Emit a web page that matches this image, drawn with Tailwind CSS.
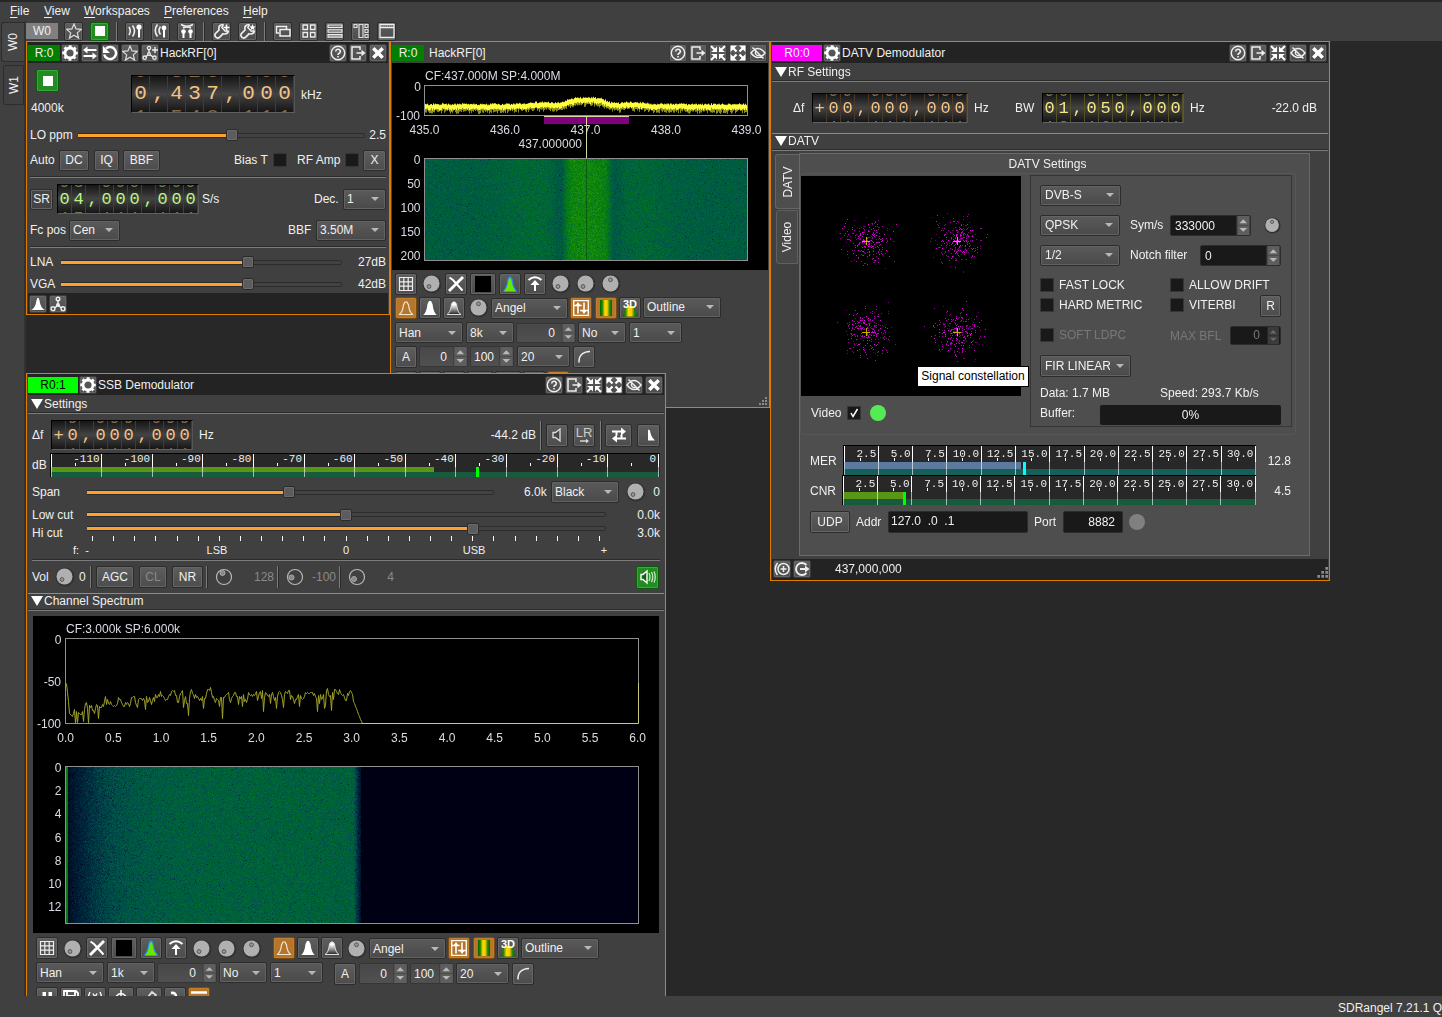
<!DOCTYPE html>
<html lang="en">
<head>
<meta charset="utf-8">
<title>SDRangel</title>
<script src="https://cdn.jsdelivr.net/npm/@tailwindcss/browser@4"></script>
</head>
<body class="h-[1017px] w-[1442px] overflow-hidden bg-[#404040] font-['Liberation_Sans',Arial,sans-serif] text-[12px] leading-[14px] text-[#f0f0f0] whitespace-nowrap
[&_button]:flex [&_button]:shrink-0 [&_button]:items-center [&_button]:justify-center [&_button]:rounded-[2px] [&_button]:border [&_button]:border-[#2c2c2c] [&_button]:bg-linear-to-b [&_button]:from-[#5e5e5e] [&_button]:to-[#4c4c4c] [&_button]:shadow-[inset_0_0_0_1px_#666]
[&_button_svg]:size-4 [&_button_svg]:shrink-0 [&_svg]:shrink-0
[&_.tb]:size-[18px] [&_.tb]:border-[#3a3a3a] [&_.tool]:size-[19px] [&_.sq]:h-[22px] [&_.sq]:w-[22px]
[&_.on]:border-[#7a4a10] [&_.on]:from-[#b5762c] [&_.on]:to-[#b5762c] [&_.on]:shadow-[inset_0_0_0_1px_#c08030]
[&_.go]:border-[#0c5c0c] [&_.go]:from-[#228b22] [&_.go]:to-[#228b22] [&_.go]:shadow-[inset_0_0_0_1px_#3aa83a]
[&_.combo]:flex [&_.combo]:shrink-0 [&_.combo]:items-center [&_.combo]:justify-between [&_.combo]:rounded-[2px] [&_.combo]:border [&_.combo]:border-[#2c2c2c] [&_.combo]:bg-linear-to-b [&_.combo]:from-[#5a5a5a] [&_.combo]:to-[#4a4a4a] [&_.combo]:pl-[3px] [&_.combo]:pr-[6px] [&_.combo]:shadow-[inset_0_0_0_1px_#626262]
[&_.combo]:after:border-x-4 [&_.combo]:after:border-t-4 [&_.combo]:after:border-x-transparent [&_.combo]:after:border-t-[#b8b8b8]
[&_.spin]:flex [&_.spin]:shrink-0 [&_.spin]:items-stretch [&_.spin]:rounded-[2px] [&_.spin]:border [&_.spin]:border-[#363636] [&_.spin]:bg-linear-to-b [&_.spin]:from-[#484848] [&_.spin]:to-[#505050]
[&_.val]:flex [&_.val]:flex-1 [&_.val]:items-center [&_.val]:justify-end [&_.val]:pr-[6px]
[&_.hr]:h-[2px] [&_.hr]:border-t [&_.hr]:border-b [&_.hr]:border-t-[#2a2a2a] [&_.hr]:border-b-[#7c7c7c]
[&_.vr]:w-[2px] [&_.vr]:shrink-0 [&_.vr]:border-r [&_.vr]:border-l [&_.vr]:border-l-[#7c7c7c] [&_.vr]:border-r-[#2a2a2a]
[&_.box]:size-[14px] [&_.box]:shrink-0 [&_.box]:border [&_.box]:border-[#363636] [&_.box]:bg-[#191919]
[&_.fill]:h-[5px] [&_.fill]:shrink-0 [&_.fill]:border-y [&_.fill]:border-[#2c2c2c] [&_.fill]:bg-[#ffa02f]
[&_.hnd]:size-[12px] [&_.hnd]:shrink-0 [&_.hnd]:rounded-[2px] [&_.hnd]:border [&_.hnd]:border-[#2a2a2a] [&_.hnd]:bg-[#5c5c5c] [&_.hnd]:shadow-[inset_0_0_0_1px_#6c6c6c]
[&_.rest]:h-[5px] [&_.rest]:flex-1 [&_.rest]:rounded-r-[2px] [&_.rest]:border [&_.rest]:border-l-0 [&_.rest]:border-[#2c2c2c] [&_.rest]:bg-[#424242]
[&_.slider]:flex [&_.slider]:shrink-0 [&_.slider]:items-center
[&_.row]:flex [&_.row]:shrink-0 [&_.row]:items-center">

<!-- icon set -->
<svg class="absolute size-0" fill="none" stroke="none">
  <symbol id="gear" viewBox="0 0 16 16"><circle cx="8" cy="8" r="5" fill="none" stroke="#fff" stroke-width="2.8"/><circle cx="8" cy="8" r="6.8" fill="none" stroke="#fff" stroke-width="2" stroke-dasharray="2.9 2.44" stroke-dashoffset="1.45"/></symbol>
  <symbol id="swap" viewBox="0 0 16 16"><path d="M4 5h10.500M1.500 11H12" stroke="#fff" stroke-width="2"/><path d="M1 5l4.500-3.500v7zM15 11l-4.500-3.500v7z" fill="#fff"/></symbol>
  <symbol id="reload" viewBox="0 0 16 16"><path d="M4 3.600A6 6 0 1 1 2.200 9.500" fill="none" stroke="#fff" stroke-width="2.500"/><path d="M1 1v7h7z" fill="#fff"/></symbol>
  <symbol id="star" viewBox="0 0 16 16"><path d="M8 1l2.100 4.900 5.200.5-4 3.500 1.300 5.200L8 12.300l-4.600 2.800 1.300-5.200-4-3.500 5.200-.5z" fill="none" stroke="#ddd" stroke-width="1.200"/></symbol>
  <symbol id="netplus" viewBox="0 0 16 16"><path d="M7 4v5M7 9l-3.500 3M7 9l4 3M10 5h6M13 2v6" stroke="#eee" stroke-width="1.400"/><g fill="#555" stroke="#eee" stroke-width="1.300"><circle cx="7" cy="3" r="1.600"/><circle cx="2.700" cy="12.700" r="1.700"/><circle cx="12.500" cy="12.700" r="1.700"/><circle cx="7" cy="9" r="1.300"/></g></symbol>
  <symbol id="net" viewBox="0 0 16 16"><path d="M8 3v6M8 9l-4.500 4M8 9l4.500 4" stroke="#eee" stroke-width="1.500"/><g fill="#555" stroke="#eee" stroke-width="1.400"><circle cx="8" cy="3" r="1.800"/><circle cx="3" cy="12.700" r="1.900"/><circle cx="13" cy="12.700" r="1.900"/></g><circle cx="8" cy="9" r="2" fill="#eee"/></symbol>
  <symbol id="help" viewBox="0 0 16 16"><circle cx="8" cy="8" r="6.700" fill="none" stroke="#eee" stroke-width="1.400"/><path d="M5.700 6.400a2.300 2.100 0 1 1 3.400 1.800Q8 8.800 8 9.900M8 11v1.600" fill="none" stroke="#eee" stroke-width="1.600"/></symbol>
  <symbol id="export" viewBox="0 0 16 16"><path d="M10 5V2H2v12h8v-3M6.500 8h6" fill="none" stroke="#eee" stroke-width="1.500"/><path d="M11.500 4.800L15.500 8l-4 3.200z" fill="#eee"/></symbol>
  <symbol id="shrink" viewBox="0 0 16 16"><path d="M1 1l4 4M15 1l-4 4M1 15l4-4M15 15l-4-4" stroke="#fff" stroke-width="2"/><path d="M7 7V1.500L5 3.500 3.500 5 1 7zM9 7V1.500L11 3.500 12.500 5 15 7zM7 9v5.500L5 12.500 3.500 11 1 9zM9 9v5.500l2-2 1.500-1.500L15 9z" fill="#fff"/></symbol>
  <symbol id="expand" viewBox="0 0 16 16"><path d="M3 3l3.500 3.500M13 3L9.500 6.500M3 13l3.500-3.500M13 13L9.500 9.500" stroke="#fff" stroke-width="2.200"/><path d="M.5.500H7L.5 7zM15.500.500H9L15.500 7zM.5 15.500H7L.5 9zM15.500 15.500H9L15.500 9z" fill="#fff"/></symbol>
  <symbol id="hide" viewBox="0 0 16 16"><path d="M1 8q7-9 14 0q-7 9-14 0zM2.500 2.500l11 11" fill="none" stroke="#eee" stroke-width="1.500"/><path d="M6 6.200a2.700 2.700 0 0 0 4 3.600" fill="none" stroke="#eee" stroke-width="1.300"/></symbol>
  <symbol id="close" viewBox="0 0 16 16"><path d="M3.300 3.300l9.400 9.400M12.700 3.300l-9.400 9.400" stroke="#fff" stroke-width="3.400"/></symbol>
  <symbol id="stop" viewBox="0 0 16 16"><path d="M3 3h10v10H3z" fill="#fff"/></symbol>
  <symbol id="rx" viewBox="0 0 16 16"><path d="M12 5v9.500" stroke="#fff" stroke-width="2"/><circle cx="12" cy="4" r="2.600" fill="#fff"/><path d="M2 4q2.500 4 0 8M5.500 2.500q4 5.500 0 11" fill="none" stroke="#eee" stroke-width="1.600"/></symbol>
  <symbol id="tx" viewBox="0 0 16 16"><path d="M11 6v8.500" stroke="#fff" stroke-width="2"/><circle cx="11" cy="5" r="2.400" fill="#fff"/><path d="M4.500 1.500q-4.500 6 0 12M7.500 3.500q-3 4 0 8" fill="none" stroke="#eee" stroke-width="1.600"/></symbol>
  <symbol id="mimo" viewBox="0 0 16 16"><path d="M4.500 9v6M11.500 9v6" stroke="#fff" stroke-width="2"/><circle cx="4.500" cy="8.500" r="2.300" fill="#fff"/><circle cx="11.500" cy="8.500" r="2.300" fill="#fff"/><path d="M2 1.500q6 3.500 12 0M4 5q4-2 8 0" fill="none" stroke="#eee" stroke-width="1.600"/></symbol>
  <symbol id="wrench" viewBox="0 0 16 16"><path d="M9.500 1.500Q4 1.500 5 7L1.300 10.700q-1 2 .5 3.500t3.500.3L9 10.800q4.500 1 5.500-3" fill="none" stroke="#eee" stroke-width="1.700"/><path d="M9.500 1.500L7.800 4.500l3.500 3.700 3.200-.4" fill="none" stroke="#eee" stroke-width="1.500"/></symbol>
  <symbol id="wrenchplus" viewBox="0 0 16 16"><use href="#wrench"/><path d="M9.500 4.500h6M12.500 1.500v6" stroke="#fff" stroke-width="1.600"/></symbol>
  <symbol id="wrenchstar" viewBox="0 0 16 16"><use href="#wrench"/><path d="M12.500 1l.9 2.300 2.400.1-1.900 1.500.7 2.400-2.100-1.400-2.100 1.400.7-2.400-1.900-1.500 2.400-.1z" fill="#fff"/></symbol>
  <symbol id="cascade" viewBox="0 0 16 16"><path d="M4 10H1.500V3.500h10V6M5 6.500h10V13H5z" fill="none" stroke="#eee" stroke-width="1.500"/></symbol>
  <symbol id="tiles" viewBox="0 0 16 16"><path d="M2 2h4.500v4.500H2zM9.500 2H14v4.500H9.500zM2 9.500h4.500V14H2zM9.500 9.500H14V14H9.500z" fill="none" stroke="#eee" stroke-width="1.300"/></symbol>
  <symbol id="stack" viewBox="0 0 16 16"><path d="M1 2h14v2.500H1zM1 6.800h14v2.500H1zM1 11.600h14v2.500H1z" fill="#777" stroke="#eee" stroke-width="1.100"/></symbol>
  <symbol id="cols" viewBox="0 0 16 16"><path d="M1 1.500h3v3H1zM6 1.500h4v13H6zM12 1.500h3v3h-3zM12 6.500h3v3h-3zM12 11.500h3v3h-3z" fill="none" stroke="#ddd" stroke-width="1.200"/></symbol>
  <symbol id="win" viewBox="0 0 16 16"><path d="M1 1.500h14v13H1zM1 4.500h14" fill="none" stroke="#eee" stroke-width="1.300"/><path d="M2 3h12" stroke="#aaa" stroke-dasharray="1 1"/></symbol>
  <symbol id="peak" viewBox="0 0 16 16"><path d="M1 14Q5.500 12 6.500 4.500L7.300 2h1.400l.8 2.500Q10.500 12 15 14z" fill="#fff"/></symbol>
  <symbol id="grid" viewBox="0 0 16 16"><path d="M1.500 1.500h13v13h-13zM5.800 1.500v13M10.200 1.500v13M1.500 5.800h13M1.500 10.200h13" fill="none" stroke="#eee" stroke-width="1.200"/></symbol>
  <symbol id="cross" viewBox="0 0 16 16"><path d="M1.500 1.500l3.500 2.500 9.500 10.500" fill="none" stroke="#fff" stroke-width="2"/><path d="M1 15L15 1" stroke="#fff" stroke-width="2.800"/></symbol>
  <symbol id="black" viewBox="0 0 16 16"><path d="M0 0h16v16H0z" fill="#000"/></symbol>
  <symbol id="hill" viewBox="0 0 16 16"><path d="M0 15.500Q4.500 13 5.500 3L7 .5h2L10.500 3q1 10 5.500 12.500z" fill="#1e90ff"/><path d="M2 15.500Q5.500 12 6.500 4L8 1.500 9.500 4q1 8 4.500 11.500z" fill="#6be600"/></symbol>
  <symbol id="up" viewBox="0 0 16 16"><path d="M8 15V7M1.500 4q6.500-5.500 13 0" fill="none" stroke="#fff" stroke-width="2"/><path d="M8 4l4.500 5h-9z" fill="#fff"/></symbol>
  <symbol id="bellline" viewBox="0 0 16 16"><path d="M1 14.500Q4.500 13 5.500 5L7 2h2l1.500 3q1 8 4.500 9.500z" fill="none" stroke="#f0e6d8" stroke-width="1.200"/></symbol>
  <symbol id="bell" viewBox="0 0 16 16"><path d="M1 15Q4.500 13 5.500 4L7 1h2l1.500 3q1 9 4.500 11z" fill="#fff"/></symbol>
  <linearGradient id="fade" x1="0" y1="0" x2="0" y2="1"><stop offset=".2" stop-color="#fff"/><stop offset="1" stop-color="#222"/></linearGradient>
  <symbol id="bellfade" viewBox="0 0 16 16"><path d="M1 14.500Q4.500 13 5.500 4L7 2h2l1.500 2q1 9 4.500 10.500z" fill="url(#fade)" stroke="#ddd"/></symbol>
  <symbol id="sliders" viewBox="0 0 16 16"><path d="M.7.700h14.600v14.600H.7zM.7 5.500h8M7 10.500h8" fill="none" stroke="#fff" stroke-width="1.300"/><path d="M5 13.500V4M11 2.500V12" stroke="#fff" stroke-width="1.600"/><path d="M5 2l2.500 3.500h-5zM11 14l2.500-3.500h-5z" fill="#fff"/></symbol>
  <linearGradient id="gyg"><stop offset="0" stop-color="#006400"/><stop offset=".2" stop-color="#228b00"/><stop offset=".4" stop-color="#ffd700"/><stop offset=".6" stop-color="#ffc800"/><stop offset=".8" stop-color="#228b00"/><stop offset="1" stop-color="#006400"/></linearGradient>
  <symbol id="fall" viewBox="0 0 16 16"><path d="M2 0h12v16H2z" fill="url(#gyg)"/></symbol>
  <symbol id="three" viewBox="0 0 16 18"><path d="M4.500 7h7l4 10.500H.5z" fill="url(#gyg)"/><text x="8" y="8.500" text-anchor="middle" font-size="11" font-weight="bold" fill="#fff">3D</text></symbol>
  <symbol id="curve" viewBox="0 0 16 16"><path d="M3 13.500Q2.500 3 14 2.500" fill="none" stroke="#eee" stroke-width="1.500"/></symbol>
  <symbol id="spk" viewBox="0 0 16 16"><path d="M4 5.500h2.500L11 2v12l-4.500-3.500H4z" fill="#444" stroke="#ddd" stroke-width="1.300"/></symbol>
  <symbol id="spkon" viewBox="0 0 16 16"><path d="M1 5.500h2L7 2v12l-4-3.500H1z" fill="#146014" stroke="#fff" stroke-width="1.400"/><path d="M9 4q2 4 0 8M11.500 3q2.500 5 0 10M14 2.500q2.500 5.500 0 11" fill="none" stroke="#bfe8bf" stroke-width="1.300"/></symbol>
  <symbol id="lr" viewBox="0 0 18 18"><text x="9" y="11" text-anchor="middle" font-size="13" fill="#ccc">LR</text><path d="M5 15h7" stroke="#ddd" stroke-width="1.400"/><path d="M11 12.700l3 2.300-3 2.300z" fill="#ddd"/></symbol>
  <symbol id="flip" viewBox="0 0 16 16"><path d="M1 4.500h11M4 11.500h11M5.500 4.500v4M10.500 11.500v-4" stroke="#fff" stroke-width="2"/><path d="M10 .5l5 4-5 4zM6 7.500l-5 4 5 4z" fill="#fff"/></symbol>
  <symbol id="half" viewBox="0 0 16 16"><path d="M7 2.500l2 1q.5 6 5 10H7z" fill="#fff"/></symbol>
  <symbol id="knobL" viewBox="0 0 20 20"><circle cx="10" cy="10" r="9.500" fill="#333"/><circle cx="9.500" cy="9.500" r="8" fill="#b0b0b0"/><circle cx="7" cy="12.500" r="1.900" fill="#999" stroke="#555"/></symbol>
  <symbol id="knobT" viewBox="0 0 20 20"><circle cx="10" cy="10" r="9.500" fill="#333"/><circle cx="9.500" cy="9.500" r="8" fill="#b0b0b0"/><circle cx="9.500" cy="5.800" r="1.900" fill="#999" stroke="#555"/></symbol>
  <symbol id="ring" viewBox="0 0 20 20"><circle cx="10" cy="10" r="7.500" fill="none" stroke="#b8b8b8" stroke-width="1.200"/></symbol>
  <symbol id="ud" viewBox="0 0 14 20"><path d="M.5 0v20" stroke="#3a3a3a"/><path d="M1 0h13v20H1z" fill="#5e5e5e"/><path d="M1 10h13" stroke="#4a4a4a"/><path d="M3.300 7.500L7.300 3.500l4 4zM3.300 12.500l4 4 4-4z" fill="#b8b8b8"/></symbol>
  <symbol id="tri" viewBox="0 0 12 10"><path d="M0 0h12L6 10z" fill="#fff"/></symbol>
  <symbol id="grip" viewBox="0 0 9 9"><path d="M7 0h2v2H7zM4 3h2v2H4zM7 3h2v2H7zM1 6h2v2H1zM4 6h2v2H4zM7 6h2v2H7z" fill="#8a8a8a"/></symbol>
</svg>

<div class="flex h-full flex-col border-t-2 border-[#262626]">
  <!-- menu bar -->
  <nav class="flex h-[19px] items-center pb-[2px] pl-[10px] [&_a]:shrink-0 [&_u]:underline-offset-2">
    <a class="w-[34px]"><u>F</u>ile</a><a class="w-[40px]"><u>V</u>iew</a><a class="w-[80px]"><u>W</u>orkspaces</a><a class="w-[79px]"><u>P</u>references</a><a><u>H</u>elp</a>
  </nav>

  <div class="flex h-[975px]">
    <!-- workspace tabs -->
    <aside class="flex w-[26px] flex-col items-end gap-[3px] border-r-2 border-[#323232] pt-[1px]">
      <div class="flex h-[40px] w-[23px] items-center justify-center rounded-l-[3px] border border-r-0 border-[#2c2c2c] bg-[#464646]"><span class="-rotate-90">W0</span></div>
      <div class="flex h-[40px] w-[21px] items-center justify-center rounded-l-[3px] border border-[#2c2c2c] bg-[#404040]"><span class="-rotate-90">W1</span></div>
    </aside>
    <div class="flex w-[1416px] flex-col">
      <!-- tool bar -->
      <div class="flex h-[20px] items-center gap-[7px] [&_svg]:size-[16px]!">
        <span class="h-[16px] w-[32px] bg-[#808080] text-center leading-[16px]">W0</span>
        <button class="tool -ml-[1px]"><svg><use href="#star"/></svg></button>
        <button class="tool go"><svg><use href="#stop"/></svg></button>
        <i class="vr h-[19px]"></i>
        <button class="tool"><svg><use href="#rx"/></svg></button>
        <button class="tool"><svg><use href="#tx"/></svg></button>
        <button class="tool"><svg><use href="#mimo"/></svg></button>
        <i class="vr h-[19px]"></i>
        <button class="tool"><svg><use href="#wrenchplus"/></svg></button>
        <button class="tool"><svg><use href="#wrenchstar"/></svg></button>
        <i class="vr h-[19px]"></i>
        <button class="tool"><svg><use href="#cascade"/></svg></button>
        <button class="tool"><svg><use href="#tiles"/></svg></button>
        <button class="tool"><svg><use href="#stack"/></svg></button>
        <button class="tool"><svg><use href="#cols"/></svg></button>
        <button class="tool"><svg><use href="#win"/></svg></button>
      </div>

      <!-- desktop -->
      <main class="relative h-[955px] overflow-hidden bg-[#282828]">

        <!-- HackRF device -->
        <section class="absolute top-0 left-0 flex h-[274px] w-[364px] flex-col border border-[#dd7c00] bg-[#404040] px-[1px]">
          <header class="row h-[21px] gap-[2px] bg-[#232323]">
            <span class="-mr-[1px] h-[16px] w-[32px] bg-[#007f00] text-center leading-[16px]">R:0</span>
            <button class="tb"><svg><use href="#gear"/></svg></button><button class="tb"><svg><use href="#swap"/></svg></button><button class="tb"><svg><use href="#reload"/></svg></button><button class="tb"><svg><use href="#star"/></svg></button><button class="tb"><svg><use href="#netplus"/></svg></button>
            <span class="-ml-[1px] flex-1">HackRF[0]</span>
            <button class="tb"><svg><use href="#help"/></svg></button><button class="tb"><svg><use href="#export"/></svg></button><button class="tb mr-[1px]"><svg><use href="#close"/></svg></button>
          </header>
          <div class="flex h-[61px] items-start">
            <div class="flex w-[103px] flex-col gap-[9px] pt-[6px] pl-[3px]">
              <button class="go ml-[5px] h-[23px] w-[23px]"><svg><use href="#stop"/></svg></button>
              <span>4000k</span>
            </div>
            <div class="mt-[12px]" data-dial="0,437,000" data-hue="orange" data-size="big"></div>
            <span class="mt-[25px] ml-[6px]">kHz</span>
          </div>
          <div class="row h-[22px] pl-[2px]">
            <span class="w-[48px]">LO ppm</span>
            <div class="slider w-[287px]"><i class="fill w-[148px]"></i><i class="hnd"></i><i class="rest"></i></div>
            <span class="flex-1 pr-[2px] text-right">2.5</span>
          </div>
          <div class="row mt-[1px] h-[26px] pl-[2px]">
            <span class="w-[29px]">Auto</span>
            <button class="h-[21px] w-[30px]">DC</button><button class="ml-[5px] h-[21px] w-[25px]">IQ</button><button class="ml-[4px] h-[21px] w-[37px]">BBF</button>
            <span class="ml-[74px] w-[39px]">Bias T</span><i class="box"></i>
            <span class="ml-[10px] w-[48px]">RF Amp</span><i class="box"></i>
            <button class="ml-[4px] h-[21px] w-[23px]">X</button>
          </div>
          <div class="hr mx-[2px] mt-[3px]"></div>
          <div class="row h-[42px] pl-[2px]">
            <button class="h-[21px] w-[23px] bg-none! bg-[#444]!">SR</button>
            <div class="ml-[4px]" data-dial="04,000,000" data-hue="green"></div>
            <span class="ml-[3px] w-[112px]">S/s</span><span class="w-[29px]">Dec.</span>
            <div class="combo h-[21px] w-[43px]">1</div>
          </div>
          <div class="row h-[20px] pl-[2px]">
            <span class="w-[39px]">Fc pos</span><div class="combo h-[21px] w-[51px]">Cen</div>
            <span class="ml-[168px] w-[28px]">BBF</span><div class="combo h-[21px] w-[70px]">3.50M</div>
          </div>
          <div class="hr mx-[2px] mt-[6px]"></div>
          <div class="row h-[28px] pl-[2px]">
            <span class="w-[31px]">LNA</span>
            <div class="slider w-[281px]"><i class="fill w-[181px]"></i><i class="hnd"></i><i class="rest"></i></div>
            <span class="flex-1 pr-[2px] text-right">27dB</span>
          </div>
          <div class="row h-[16px] pl-[2px]">
            <span class="w-[31px]">VGA</span>
            <div class="slider w-[281px]"><i class="fill w-[181px]"></i><i class="hnd"></i><i class="rest"></i></div>
            <span class="flex-1 pr-[2px] text-right">42dB</span>
          </div>
          <footer class="row mt-[1px] flex-1 gap-[2px] bg-[#232323] pl-[1px]"><button class="tb"><svg><use href="#peak"/></svg></button><button class="tb"><svg><use href="#net"/></svg></button></footer>
        </section>

        <!-- HackRF main spectrum -->
        <section class="absolute top-0 left-[364px] flex h-[367px] w-[380px] flex-col border border-[#dd7c00] bg-[#404040]">
          <header class="row h-[21px] gap-[2px] px-[1px]">
            <span class="h-[16px] w-[32px] bg-[#007f00] text-center leading-[16px]">R:0</span>
            <span class="ml-[3px] flex-1">HackRF[0]</span>
            <button class="tb"><svg><use href="#help"/></svg></button><button class="tb"><svg><use href="#export"/></svg></button><button class="tb"><svg><use href="#shrink"/></svg></button><button class="tb"><svg><use href="#expand"/></svg></button><button class="tb mr-[1px]"><svg><use href="#hide"/></svg></button>
          </header>
          <div class="relative mx-[1px] h-[207px] bg-black">
            <canvas id="mainPlot" width="376" height="207"></canvas>
            <svg class="absolute inset-0" width="376" height="207" fill="#dcdce6" id="mainAxes"></svg>
          </div>
          <div class="flex flex-col pl-[4px]">
            <div class="row mt-[3px] h-[22px]">
              <button class="sq"><svg><use href="#grid"/></svg></button><svg class="ml-[5px] size-5"><use href="#knobL"/></svg>
              <button class="sq ml-[3px]"><svg><use href="#cross"/></svg></button><button class="sq ml-[3px] w-[26px]!"><svg><use href="#black"/></svg></button><button class="sq ml-[3px]"><svg><use href="#hill"/></svg></button><button class="sq ml-[3px]"><svg><use href="#up"/></svg></button>
              <svg class="ml-[5px] size-5"><use href="#knobL"/></svg><svg class="ml-[5px] size-5"><use href="#knobL"/></svg><svg class="ml-[5px] size-5"><use href="#knobT"/></svg>
            </div>
            <div class="row mt-[2px] h-[22px]">
              <button class="sq on"><svg><use href="#bellline"/></svg></button><button class="sq ml-[2px]"><svg><use href="#bell"/></svg></button><button class="sq ml-[2px]"><svg><use href="#bellfade"/></svg></button>
              <svg class="ml-[4px] size-5"><use href="#knobT"/></svg>
              <div class="combo ml-[2px] h-[21px] w-[77px]">Angel</div>
              <button class="sq on ml-[2px]"><svg><use href="#sliders"/></svg></button><button class="sq on ml-[3px]"><svg><use href="#fall"/></svg></button><button class="sq ml-[2px]"><svg class="h-[18px]!"><use href="#three"/></svg></button>
              <div class="combo mb-[2px] ml-[2px] h-[21px] w-[78px]">Outline</div>
            </div>
            <div class="row mt-[3px] h-[21px]">
              <div class="combo h-[21px] w-[68px]">Han</div><div class="combo ml-[3px] h-[21px] w-[48px]">8k</div>
              <div class="spin ml-[2px] h-[20px] w-[60px]"><span class="val">0</span><svg class="h-[18px] w-[14px]"><use href="#ud"/></svg></div>
              <div class="combo ml-[2px] h-[21px] w-[48px]">No</div><div class="combo ml-[3px] h-[21px] w-[53px]">1</div>
            </div>
            <div class="row mt-[3px] h-[21px]">
              <button class="sq">A</button>
              <div class="spin ml-[2px] h-[21px] w-[49px]"><span class="val">0</span><svg class="h-[19px] w-[14px]"><use href="#ud"/></svg></div>
              <div class="spin ml-[2px] h-[21px] w-[44px]"><span class="val pr-[5px]!">100</span><svg class="h-[19px] w-[14px]"><use href="#ud"/></svg></div>
              <div class="combo ml-[3px] h-[21px] w-[53px]">20</div><button class="sq ml-[3px]"><svg><use href="#curve"/></svg></button>
            </div>
            <div class="row mt-[4px] h-[22px] gap-[2px]"><button class="sq"></button><button class="sq"></button><button class="sq"></button><button class="sq w-[26px]!"></button><button class="sq w-[26px]!"></button><button class="sq"></button><button class="sq on"></button></div>
          </div>
          <div class="mt-auto flex justify-end pr-[2px] pb-[1px]"><svg class="size-[9px]"><use href="#grip"/></svg></div>
        </section>

        <!-- DATV demodulator -->
        <section class="absolute top-0 left-[744px] flex h-[540px] w-[560px] flex-col border border-[#dd7c00] bg-[#404040] px-[1px]">
          <header class="row h-[21px] gap-[2px] bg-[#232323]">
            <span class="-mr-[1px] h-[16px] w-[50px] bg-[#ff00ff] text-center leading-[16px]">R0:0</span>
            <button class="tb"><svg><use href="#gear"/></svg></button>
            <span class="-ml-[1px] flex-1">DATV Demodulator</span>
            <button class="tb"><svg><use href="#help"/></svg></button><button class="tb"><svg><use href="#export"/></svg></button><button class="tb"><svg><use href="#shrink"/></svg></button><button class="tb"><svg><use href="#hide"/></svg></button><button class="tb mr-[1px]"><svg><use href="#close"/></svg></button>
          </header>
          <div class="row h-[17px] gap-[1px] pl-[3px]"><svg class="h-[10px] w-[12px]"><use href="#tri"/></svg>RF Settings</div>
          <div class="hr"></div>
          <div class="row h-[51px] pl-[21px]">
            <span class="w-[19px]">Δf</span><div data-dial="+00,000,000" data-hue="orange"></div>
            <span class="ml-[6px] w-[41px]">Hz</span><span class="w-[27px]">BW</span>
            <div data-dial="01,050,000" data-hue="yellow"></div><span class="ml-[6px]">Hz</span>
            <span class="flex-1 pr-[11px] text-right">-22.0 dB</span>
          </div>
          <div class="h-px shrink-0 bg-[#dd7c00]"></div>
          <div class="row h-[15px] gap-[1px] pb-[2px] pl-[3px]"><svg class="h-[10px] w-[12px]"><use href="#tri"/></svg>DATV</div>
          <div class="hr"></div>
          <div class="flex h-[408px] shrink-0 pt-[2px] pl-[3px]">
            <div class="flex w-[24px] flex-col items-end gap-[1px] pt-[1px]">
              <div class="flex h-[55px] w-[24px] items-center justify-center rounded-l-[3px] border border-r-0 border-[#666] bg-[#4e4e4e]"><span class="-rotate-90">DATV</span></div>
              <div class="mr-[1px] flex h-[54px] w-[22px] items-center justify-center rounded-l-[3px] border border-[#606060] bg-[#484848]"><span class="-rotate-90">Video</span></div>
            </div>
            <div class="flex h-[403px] w-[511px] flex-col border border-[#6a6a6a] bg-[#4e4e4e]">
              <div class="h-[19px] shrink-0 pr-[14px] text-center leading-[20px]">DATV Settings</div>
              <div class="mr-[13px] flex h-[262px] shrink-0 rounded-[2px] border border-[#565656]">
                <div class="w-[229px] pt-[2px]">
                  <div class="relative h-[220px] w-[220px] bg-black">
                    <canvas id="constellation" width="220" height="220"></canvas>
                    <div class="absolute top-[190px] left-[116px] z-10 h-[21px] w-[112px] border border-black bg-white text-center leading-[19px] text-black">Signal constellation</div>
                  </div>
                  <div class="row h-[34px] pl-[10px]"><span class="w-[36px]">Video</span>
                    <svg class="size-[14px]" viewBox="0 0 14 14"><path d="M.5.500h13v13H.5z" fill="#191919" stroke="#363636"/><path d="M4 7l2 3.500 4.500-7.500" fill="none" stroke="#fff" stroke-width="1.500"/></svg>
                    <i class="ml-[9px] size-4 rounded-full bg-[#55eb55]"></i></div>
                </div>
                <div class="mt-[1px] flex h-[252px] w-[262px] flex-col border border-[#363636] pl-[9px]">
                  <div class="row mt-[4px] h-[30px]"><div class="combo h-[21px] w-[81px] pl-[4px]!">DVB-S</div></div>
                  <div class="row h-[30px]"><div class="combo h-[21px] w-[80px] pl-[4px]!">QPSK</div><span class="ml-[10px] w-[40px]">Sym/s</span>
                    <div class="spin mt-[1px] h-[21px] w-[81px] border-[#2c2c2c]! from-[#191919]! to-[#191919]!"><span class="val justify-start! pl-[4px]">333000</span><svg class="h-[19px] w-[14px]"><use href="#ud"/></svg></div>
                    <svg class="ml-[13px] size-[17px]"><use href="#knobT"/></svg></div>
                  <div class="row h-[30px]"><div class="combo h-[21px] w-[80px] pl-[4px]!">1/2</div><span class="ml-[10px] w-[70px]">Notch filter</span>
                    <div class="spin mt-[1px] h-[21px] w-[81px] border-[#2c2c2c]! from-[#191919]! to-[#191919]!"><span class="val justify-start! pl-[4px]">0</span><svg class="h-[19px] w-[14px]"><use href="#ud"/></svg></div></div>
                  <div class="row h-[30px]"><i class="box"></i><span class="ml-[5px] w-[111px]">FAST LOCK</span><i class="box"></i><span class="ml-[5px]">ALLOW DRIFT</span></div>
                  <div class="row -mt-[5px] h-[20px]"><i class="box"></i><span class="ml-[5px] w-[111px]">HARD METRIC</span><i class="box"></i><span class="ml-[5px] w-[71px]">VITERBI</span><button class="mt-[2px] h-[22px] w-[21px]">R</button></div>
                  <div class="row mt-[10px] h-[20px] text-[#787878]"><i class="box"></i><span class="ml-[5px] w-[111px]">SOFT LDPC</span><span class="mt-[2px] w-[60px]">MAX BFL</span>
                    <div class="spin h-[19px] w-[51px] border-[#2c2c2c]! from-[#191919]! to-[#191919]!"><span class="val">0</span><svg class="h-[17px] w-[14px] opacity-50"><use href="#ud"/></svg></div></div>
                  <div class="row mt-[10px] h-[22px]"><div class="combo h-[22px] w-[91px] pl-[4px]!"><span class="w-[65px] overflow-hidden">FIR LINEAR</span></div></div>
                  <div class="row mt-[6px] h-[20px]"><span class="w-[120px]">Data: 1.7 MB</span><span>Speed: 293.7 Kb/s</span></div>
                  <div class="row h-[20px]"><span class="w-[60px]">Buffer:</span><div class="mt-[3px] h-[20px] w-[181px] rounded-[2px] bg-[#191919] text-center leading-[20px]">0%</div></div>
                </div>
              </div>
              <div class="row mt-[10px] h-[30px] pl-[10px]"><span class="mt-[2px] w-[33px]">MER</span><svg data-meter="mer" width="413" height="30"></svg><span class="mt-[2px] flex-1 pr-[18px] text-right">12.8</span></div>
              <div class="row h-[30px] pl-[10px]"><span class="mt-[2px] w-[32px]">CNR</span><svg data-meter="cnr" width="414" height="30"></svg><span class="mt-[2px] flex-1 pr-[18px] text-right">4.5</span></div>
              <div class="row mt-[5px] h-[23px] pl-[10px]"><button class="h-[22px] w-[40px]">UDP</button><span class="ml-[6px] w-[32px]">Addr</span>
                <div class="h-[22px] w-[140px] rounded-[2px] border border-[#2c2c2c] bg-[#191919] pl-[2px] leading-[19px] whitespace-pre">127.0  .0  .1</div>
                <span class="ml-[6px] w-[29px]">Port</span><div class="h-[22px] w-[60px] rounded-[2px] border border-[#2c2c2c] bg-[#191919] pr-[7px] text-right leading-[20px]">8882</div>
                <i class="ml-[6px] size-4 rounded-full bg-[#808080]"></i></div>
            </div>
          </div>
          <footer class="row flex-1 gap-[2px] bg-[#232323] pb-[1px] pl-[1px]">
            <button class="tb"><svg viewBox="0 0 16 16"><circle cx="9.500" cy="8" r="5.500" fill="none" stroke="#eee" stroke-width="1.500"/><path d="M6.500 8h6M9.500 5v6M3.500 2q-4.500 6 0 12" fill="none" stroke="#eee" stroke-width="1.500"/></svg></button>
            <button class="tb"><svg viewBox="0 0 16 16"><path d="M12.500 4A6 6 0 1 0 12.500 12M6 8h6" fill="none" stroke="#eee" stroke-width="1.900"/><path d="M11 4.500L15.500 8 11 11.500z" fill="#eee"/></svg></button>
            <span class="ml-[22px] flex-1">437,000,000</span><svg class="mt-[7px] size-[12px]"><use href="#grip"/></svg>
          </footer>
        </section>

        <!-- SSB demodulator -->
        <section class="absolute top-[332px] left-0 flex h-[660px] w-[640px] flex-col border border-[#dd7c00] bg-[#404040] px-[1px]">
          <header class="row h-[21px] gap-[2px] bg-[#232323]">
            <span class="-mr-[1px] h-[16px] w-[50px] bg-[#00ff00] text-center leading-[16px] text-black">R0:1</span>
            <button class="tb"><svg><use href="#gear"/></svg></button>
            <span class="-ml-[1px] flex-1">SSB Demodulator</span>
            <button class="tb"><svg><use href="#help"/></svg></button><button class="tb"><svg><use href="#export"/></svg></button><button class="tb"><svg><use href="#shrink"/></svg></button><button class="tb"><svg><use href="#expand"/></svg></button><button class="tb"><svg><use href="#hide"/></svg></button><button class="tb mr-[1px]"><svg><use href="#close"/></svg></button>
          </header>
          <div class="row h-[17px] gap-[1px] pl-[3px]"><svg class="h-[10px] w-[12px]"><use href="#tri"/></svg>Settings</div>
          <div class="hr"></div>
          <div class="row mt-[6px] h-[30px] pl-[4px]">
            <span class="w-[19px]">Δf</span><div data-dial="+0,000,000" data-hue="orange"></div><span class="ml-[6px]">Hz</span>
            <span class="flex-1 pr-[4px] text-right">-44.2 dB</span>
            <i class="vr h-[29px]"></i><button class="ml-[4px] h-[23px] w-[22px]"><svg><use href="#spk"/></svg></button><button class="ml-[5px] h-[23px] w-[22px]"><svg class="size-[18px]!"><use href="#lr"/></svg></button>
            <i class="vr ml-[5px] h-[29px]"></i><button class="ml-[3px] h-[23px] w-[27px]"><svg><use href="#flip"/></svg></button><button class="mr-[4px] ml-[5px] h-[23px] w-[23px]"><svg><use href="#half"/></svg></button>
          </div>
          <div class="row mt-[3px] h-[24px] pl-[4px]"><span class="w-[18px]">dB</span><svg data-meter="db" width="610" height="24"></svg></div>
          <div class="row mt-[3px] h-[24px] pl-[4px]">
            <span class="w-[55px]">Span</span><div class="slider w-[407px]"><i class="fill w-[196px]"></i><i class="hnd"></i><i class="rest"></i></div>
            <span class="ml-[30px] w-[27px]">6.0k</span><div class="combo h-[22px] w-[68px]">Black</div><svg class="ml-[7px] size-5"><use href="#knobL"/></svg><span class="flex-1 pr-[4px] text-right">0</span>
          </div>
          <div class="row h-[21px] pl-[4px]">
            <span class="w-[55px]">Low cut</span><div class="slider w-[519px]"><i class="fill w-[253px]"></i><i class="hnd"></i><i class="rest"></i></div><span class="flex-1 pr-[4px] text-right">0.0k</span>
          </div>
          <div class="flex h-[35px] shrink-0 pl-[4px]">
            <span class="w-[55px] pt-[1px]">Hi cut</span>
            <div class="w-[519px]"><div class="slider -mt-[2px] h-[11px] w-[519px]"><i class="fill w-[380px]"></i><i class="hnd"></i><i class="rest"></i></div>
              <svg class="-ml-[20px] overflow-visible" width="539" height="24" font-size="11" fill="#f0f0f0" id="bandTicks"></svg></div>
            <span class="flex-1 pt-[1px] pr-[4px] text-right">3.0k</span>
          </div>
          <div class="hr mr-[4px] ml-[4px] -mt-[1px] shrink-0"></div>
          <div class="row h-[32px] pl-[4px]">
            <span class="w-[23px]">Vol</span><svg class="size-5"><use href="#knobL"/></svg><span class="ml-[4px] w-[11px]">0</span><i class="vr h-[22px]"></i>
            <button class="ml-[4px] h-[22px] w-[38px]">AGC</button><button class="ml-[5px] h-[22px] w-[28px] text-[#8a8a8a]">CL</button><button class="ml-[5px] h-[22px] w-[31px]">NR</button>
            <i class="vr ml-[3px] h-[22px]"></i>
            <svg class="ml-[6px] size-5" viewBox="0 0 20 20"><use href="#ring"/><circle cx="8.500" cy="6" r="2.500" fill="#888" stroke="#aaa"/></svg><span class="w-[40px] text-right text-[#8a8a8a]">128</span>
            <i class="vr ml-[3px] h-[22px]"></i>
            <svg class="ml-[6px] size-5" viewBox="0 0 20 20"><use href="#ring"/><circle cx="6.500" cy="10.500" r="2.500" fill="#888" stroke="#aaa"/></svg><span class="w-[31px] text-right text-[#8a8a8a]">-100</span>
            <i class="vr ml-[3px] h-[22px]"></i>
            <svg class="ml-[6px] size-5" viewBox="0 0 20 20"><use href="#ring"/><circle cx="7" cy="12" r="2.500" fill="#888" stroke="#aaa"/></svg><span class="w-[27px] text-right text-[#8a8a8a]">4</span>
            <button class="go mr-[5px] ml-auto h-[23px] w-[23px]"><svg><use href="#spkon"/></svg></button>
          </div>
          <div class="h-px shrink-0 bg-[#dd7c00]"></div>
          <div class="row h-[15px] gap-[1px] pb-[2px] pl-[3px]"><svg class="h-[10px] w-[12px]"><use href="#tri"/></svg>Channel Spectrum</div>
          <div class="hr shrink-0"></div>
          <div class="relative mt-[5px] ml-[5px] h-[317px] w-[626px] shrink-0 bg-black">
            <canvas id="chanPlot" width="626" height="317"></canvas>
            <svg class="absolute inset-0" width="626" height="317" fill="#dcdce6" id="chanAxes"></svg>
          </div>
          <div class="row mt-[4px] h-[22px] pl-[8px]">
            <button class="sq"><svg><use href="#grid"/></svg></button><svg class="mt-[2px] ml-[5px] size-5"><use href="#knobL"/></svg>
            <button class="sq ml-[3px]"><svg><use href="#cross"/></svg></button><button class="sq ml-[3px] w-[26px]!"><svg><use href="#black"/></svg></button><button class="sq ml-[3px]"><svg><use href="#hill"/></svg></button><button class="sq ml-[3px]"><svg><use href="#up"/></svg></button>
            <svg class="mt-[2px] ml-[5px] size-5"><use href="#knobL"/></svg><svg class="mt-[2px] ml-[5px] size-5"><use href="#knobL"/></svg><svg class="mt-[2px] ml-[5px] size-5"><use href="#knobT"/></svg>
            <button class="sq on ml-[11px]"><svg><use href="#bellline"/></svg></button><button class="sq ml-[2px]"><svg><use href="#bell"/></svg></button><button class="sq ml-[2px]"><svg><use href="#bellfade"/></svg></button>
            <svg class="mt-[2px] ml-[4px] size-5"><use href="#knobT"/></svg>
            <div class="combo mt-[1px] ml-[2px] h-[21px] w-[77px]">Angel</div>
            <button class="sq on ml-[2px]"><svg><use href="#sliders"/></svg></button><button class="sq on ml-[3px]"><svg><use href="#fall"/></svg></button><button class="sq ml-[2px]"><svg class="h-[18px]!"><use href="#three"/></svg></button>
            <div class="combo ml-[2px] h-[21px] w-[78px]">Outline</div>
          </div>
          <div class="row mt-[3px] h-[21px] pl-[8px]">
            <div class="combo h-[21px] w-[68px]">Han</div><div class="combo ml-[3px] h-[21px] w-[48px]">1k</div>
            <div class="spin ml-[2px] h-[20px] w-[60px]"><span class="val">0</span><svg class="h-[18px] w-[14px]"><use href="#ud"/></svg></div>
            <div class="combo ml-[2px] h-[21px] w-[48px]">No</div><div class="combo ml-[3px] h-[21px] w-[53px]">1</div>
            <button class="sq mt-[2px] ml-[11px]">A</button>
            <div class="spin mt-[2px] ml-[3px] h-[21px] w-[49px]"><span class="val">0</span><svg class="h-[19px] w-[14px]"><use href="#ud"/></svg></div>
            <div class="spin mt-[2px] ml-[2px] h-[21px] w-[44px]"><span class="val pr-[5px]!">100</span><svg class="h-[19px] w-[14px]"><use href="#ud"/></svg></div>
            <div class="combo mt-[2px] ml-[2px] h-[21px] w-[53px]">20</div><button class="sq mt-[2px] ml-[3px]"><svg><use href="#curve"/></svg></button>
          </div>
          <div class="row mt-[4px] h-[22px] gap-[2px] pl-[8px]">
            <button class="sq"><svg viewBox="0 0 16 16"><path d="M3.500 2H7v12H3.500zM9.500 2H13v12H9.500z" fill="#fff"/></svg></button>
            <button class="sq"><svg viewBox="0 0 16 16"><path d="M1 1h12l2 2v12H1zM4 1v5h8V1" fill="none" stroke="#fff" stroke-width="1.800"/></svg></button>
            <button class="sq"><svg viewBox="0 0 16 16"><path d="M3 2q-3 6 0 12M13 2q3 6 0 12M6 3.500L8 7l2-3.500" fill="none" stroke="#fff" stroke-width="1.400"/></svg></button>
            <button class="sq w-[26px]!"><svg viewBox="0 0 16 16"><path d="M8 0v16M3 6.500q5-6 10 0" fill="none" stroke="#fff" stroke-width="1.500"/></svg></button>
            <button class="sq w-[26px]!"><svg viewBox="0 0 16 16"><path d="M3 12L11 2l4 3-8 10" fill="none" stroke="#ddd" stroke-width="1.800"/></svg></button>
            <button class="sq"><svg viewBox="0 0 16 16"><path d="M4 3q5-1 5 4l5 7" fill="none" stroke="#fff" stroke-width="2.600"/></svg></button>
            <button class="sq on"><svg viewBox="0 0 16 16"><path d="M0 2.500h16M0 8h16" stroke="#fff" stroke-width="2.600"/></svg></button>
          </div>
        </section>
      </main>
    </div>
  </div>
  <!-- status bar -->
  <footer class="flex h-[21px] items-center overflow-hidden pt-[2px] pl-[1338px]"><span class="w-[104px] overflow-hidden">SDRangel 7.21.1 Q</span></footer>
</div>

<script>
// repeatable pseudo random numbers, so that noise is the same on each load
let seed = 7;
const rnd = () => (seed = (seed * 16807) % 2147483647) / 2147483647;
const gauss = () => rnd() + rnd() + rnd() + rnd() - 2;

// rolling digit dials
const hues = {
  orange: ['text-[#f5c285]', 'text-[#8a6a45]', 'border-[#4c3a28]'],
  green: ['text-[#b9f584]', 'text-[#62824a]', 'border-[#38482c]'],
  yellow: ['text-[#f5e684]', 'text-[#877d42]', 'border-[#55501f]'],
};
document.querySelectorAll('[data-dial]').forEach(el => {
  const [main, dim, edge] = hues[el.dataset.hue], big = el.dataset.size === 'big';
  const cell = big ? 'h-[36px] w-[18px] text-[21px]' : 'h-[28px] w-[14px] pt-[1px] text-[17px]';
  const line = big ? 'h-[24px] leading-[24px]' : 'h-[19px] leading-[19px]';
  const digit = (c, d) => /\d/.test(c) ? (+c + d + 10) % 10 : ' ';
  el.innerHTML = '<div class="flex shrink-0 border border-t-[#000] border-l-[#000] border-r-[#555] border-b-[#606060] bg-[#222]">' +
    [...el.dataset.dial].map(c => `<div class="${cell} ${edge} flex flex-col justify-center overflow-hidden border-r bg-linear-to-b from-[#161616] via-[#444] to-[#161616] text-center font-['Liberation_Mono',monospace]">
      <span class="${line} ${dim} shrink-0 translate-y-[2px]">${digit(c, -1)}</span><span class="${line} ${main} shrink-0">${c}</span><span class="${line} ${dim} shrink-0">${digit(c, 1)}</span></div>`).join('') + '</div>';
});

// level meters
const range = n => Array.from({ length: n }, (_, i) => i);
const meters = {
  mer: { step: 34.28, x0: 1, labels: range(12).map(i => ((i + 1) * 2.5).toFixed(1)), bar: 17, mid: 24, base: 12, end: 177, mark: 180, top: '#5b7a9e', low: '#16605c', tip: '#00ffff' },
  cnr: { step: 34.33, x0: 1, labels: range(12).map(i => ((i + 1) * 2.5).toFixed(1)), bar: 17, mid: 24, base: 12, end: 61, mark: 61, top: '#5a9616', low: '#165c3c', tip: '#00ff00' },
  db: { step: 50.6, x0: 1, labels: range(12).map(i => String(-110 + i * 10)), bar: 14, mid: 19, base: 9, end: 383, mark: 426, top: '#5a9616', low: '#165c3c', tip: '#00ff00' },
};
document.querySelectorAll('[data-meter]').forEach(el => {
  const m = meters[el.dataset.meter], w = +el.getAttribute('width'), h = +el.getAttribute('height');
  let s = `<rect width="${w}" height="${h}" fill="#282828"/><path d="M0 .5H${w}M.5 0V${h}" stroke="#000"/>
    <rect x="1" y="${m.bar}" width="${m.end}" height="${m.mid - m.bar}" fill="${m.top}"/><rect x="1" y="${m.mid}" width="${w - 2}" height="${h - m.mid}" fill="${m.low}"/>`;
  for (let i = 0; i <= 12; i++) {
    const x = Math.round(m.x0 + i * m.step - .4);
    s += `<rect x="${x}" y="1" width="1" height="${m.bar - 1}" fill="#fff"/><rect x="${x}" y="${m.bar}" width="1" height="${h - m.bar}" fill="#fff" opacity=".6"/>`;
    if (i < 12) s += `<rect x="${Math.round(x + m.step / 2 - 1)}" y="${m.base + 1}" width="1" height="3" fill="#fff"/>
      <text x="${(m.x0 + (i + 1) * m.step - 2).toFixed(1)}" y="${m.base}" text-anchor="end" font-family="Liberation Mono" font-size="11" fill="#eee">${m.labels[i]}</text>`;
  }
  el.innerHTML = s + `<rect x="${m.mark}" y="${m.bar}" width="3" height="${h - m.bar}" fill="${m.tip}"/>`;
});

// filter scale below the cut sliders
document.getElementById('bandTicks').innerHTML = range(25).map(i => `<rect x="${Math.round(25 + i * 21.13)}" y="2" width="1" height="5" fill="#fff"/>`).join('') +
  [['f:', 9], ['-', 20], ['LSB', 150], ['0', 279], ['USB', 407], ['+', 537]].map(([t, x]) => `<text x="${x}" y="20" text-anchor="middle">${t}</text>`).join('');

const label = (t, x, y, a) => `<text x="${x}" y="${y + 4}" text-anchor="${a}">${t}</text>`;

// colour map of the waterfalls: level 0..1
const stops = [[0, 0, 0, 20], [.3, 0, 38, 62], [.5, 0, 82, 74], [.65, 0, 104, 52], [.8, 8, 126, 16], [1, 50, 165, 0]];
function colour(v) {
  v = Math.max(0, Math.min(1, v));
  let i = 1; while (stops[i][0] < v) i++;
  const a = stops[i - 1], b = stops[i], f = (v - a[0]) / (b[0] - a[0]);
  return [1, 2, 3].map(k => a[k] + (b[k] - a[k]) * f);
}
function waterfall(ctx, x, y, w, h, level) {
  const img = ctx.createImageData(w, h);
  for (let j = 0; j < h; j++) for (let i = 0; i < w; i++) {
    const c = colour(level(i, j)), o = (j * w + i) * 4;
    img.data[o] = c[0]; img.data[o + 1] = c[1]; img.data[o + 2] = c[2]; img.data[o + 3] = 255;
  }
  ctx.putImageData(img, x, y);
}
const bump = (x, c, s) => Math.exp(-((x - c) ** 2) / (2 * s * s));

// main spectrum
{
  const ctx = document.getElementById('mainPlot').getContext('2d');
  const shape = i => .07 * bump(i, 108, 25) + .06 * bump(i, 215, 22) + .23 / (1 + Math.exp((Math.abs(i - 162) - 22) / 1.8)) + .03 * bump(i, 162, 10) - .07 * bump(i, 134, 5) - .06 * bump(i, 190, 5);
  waterfall(ctx, 33, 96, 322, 101, i => .57 + shape(i) + .08 * gauss() - (rnd() < .03 ? .15 : 0));
  for (let i = 0; i < 322; i++) {
    const lift = 6.5 / (1 + Math.exp((Math.abs(i - 161) - 20) / 3)) + 2 * bump(i, 118, 12) + 2 * bump(i, 205, 12);
    const y = 41.5 - lift + gauss() * .8;
    ctx.fillStyle = '#8f8f20'; ctx.fillRect(33 + i, y - rnd(), 1, 6 + rnd() * 3.5);
    ctx.fillStyle = '#ffff40'; ctx.fillRect(33 + i, y, 1, 4 + rnd() * 1.5);
  }
  ctx.fillStyle = '#800080'; ctx.fillRect(152, 53, 85, 8);
  ctx.fillStyle = '#d8d8a0'; ctx.fillRect(152, 53, 85, 1); ctx.fillRect(194, 53, 1, 42);
  ctx.fillStyle = 'rgba(0,70,20,.6)'; ctx.fillRect(194, 96, 1, 101);
  ctx.strokeStyle = '#909090'; ctx.strokeRect(32.5, 22.5, 323, 30); ctx.strokeRect(32.5, 95.5, 323, 102);
  document.getElementById('mainAxes').innerHTML = label('CF:437.000M SP:4.000M', 33, 13, 'start') +
    label('0', 29, 24, 'end') + label('-100', 28, 53, 'end') +
    range(5).map(i => label((435 + i) + '.0', 32.5 + i * 80.5, 67, 'middle')).join('') +
    label('437.000000', 190, 81, 'end') + range(5).map(i => label(i * 50, 28.5, 97 + i * 24, 'end')).join('');
}

// channel spectrum
{
  const ctx = document.getElementById('chanPlot').getContext('2d');
  waterfall(ctx, 33, 151, 572, 156, i => {
    if (i < 2) return .78;
    if (i > 294) return 0;
    let v = .08 + .5 * (1 - Math.exp(-i / 32)) + .02 * bump(i, 200, 90);
    if (i > 287) v -= (i - 287) * .06;
    return v + .09 * gauss() - (rnd() < .04 ? .15 : 0);
  });
  ctx.strokeStyle = '#a2a228'; ctx.lineWidth = 1; ctx.beginPath();
  let drift = 0;
  for (let i = 0; i <= 296; i++) {
    let y = i < 3 ? 45 + i * 9 : i < 6 ? 72 + i : 58 + 20 * Math.exp(-(i - 6) / 45) - 2 * bump(i, 190, 60);
    drift = drift * .55 + gauss() * 4.5;
    if (i > 6) y += drift + (rnd() < .09 ? 4 + rnd() * 14 : 0);
    if (i > 286) y = 60 + (i - 286) * 2.600;
    ctx.lineTo(33.5 + i, 22.5 + Math.min(85, Math.round(y)));
  }
  ctx.stroke();
  ctx.strokeStyle = '#909090'; ctx.strokeRect(32.5, 22.5, 573, 85); ctx.strokeRect(32.5, 150.5, 573, 157);
  ctx.fillStyle = '#c8c878'; ctx.fillRect(329, 107, 276, 1); ctx.fillRect(605, 67, 1, 40);
  document.getElementById('chanAxes').innerHTML = label('CF:3.000k SP:6.000k', 33, 13, 'start') +
    label('0', 28.5, 24, 'end') + label('-50', 28, 66, 'end') + label('-100', 28, 108, 'end') +
    range(13).map(i => label((i / 2).toFixed(1), (32.7 + i * 47.67).toFixed(1), 122, 'middle')).join('') +
    range(7).map(i => label(i * 2, 28.5, Math.round(152 + i * 23.2), 'end')).join('');
}

// QPSK constellation
{
  const ctx = document.getElementById('constellation').getContext('2d');
  [[65, 65], [156, 65], [65, 156], [156, 156]].forEach(([cx, cy]) => {
    for (let k = 0; k < 290; k++) {
      const a = .35 + rnd() * .65;
      ctx.fillStyle = `rgba(230,0,230,${a.toFixed(2)})`;
      ctx.fillRect(Math.round(cx + gauss() * 19), Math.round(cy + gauss() * 19), 1, 1);
    }
    ctx.fillStyle = '#c8b000'; ctx.fillRect(cx - 4, cy, 8, 1); ctx.fillRect(cx, cy - 4, 1, 8);
  });
}
</script>
</body>
</html>
